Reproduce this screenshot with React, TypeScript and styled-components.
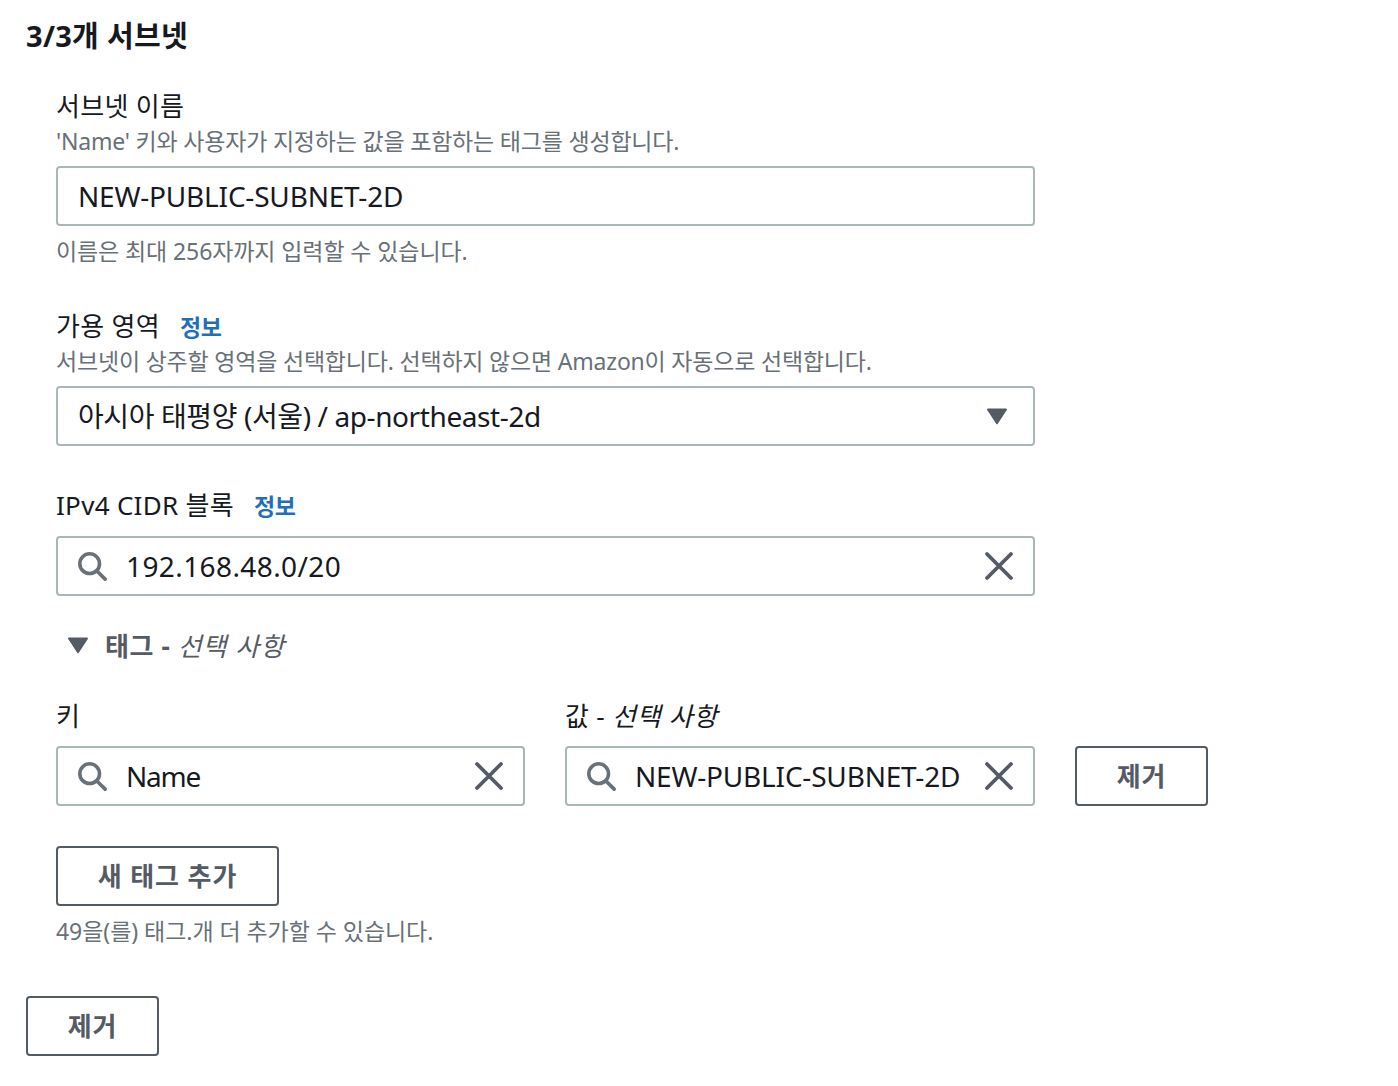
import React from "react";
import styled, { createGlobalStyle } from "styled-components";

const GlobalStyle = createGlobalStyle`
  html, body {
    margin: 0;
    background: #fff;
    font-family: "Noto Sans", "Noto Sans CJK KR", sans-serif;
  }
`;

const Page = styled.div`
  width: 1398px;
  height: 1086px;
  box-sizing: border-box;
  padding: 18px 0 0 26px;
  overflow: hidden;
`;

const Title = styled.h2`
  margin: 0;
  font-size: 29px;
  line-height: 36px;
  font-weight: 700;
  letter-spacing: 0.3px;
  color: #16191f;
`;

const Body = styled.div`
  width: 979px;
  margin: 34px 0 0 30px;
`;

const Field = styled.div<{ $gap?: number }>`
  margin-top: ${(p) => p.$gap ?? 0}px;
`;

const LabelRow = styled.div`
  display: flex;
  align-items: center;
  gap: 20px;
  height: 36px;
`;

const Label = styled.span`
  font-size: 26px;
  line-height: 36px;
  color: #16191f;
  letter-spacing: 0.3px;
  em {
    font-style: italic;
    letter-spacing: 0.7px;
  }
`;

const InfoLink = styled.a`
  font-size: 23px;
  font-weight: 700;
  color: #1f70b8;
  letter-spacing: -0.4px;
`;

const Hint = styled.div<{ $top?: number; $tracking?: number }>`
  margin-top: ${(p) => p.$top ?? 0}px;
  font-size: 23px;
  line-height: 32px;
  color: #687078;
  letter-spacing: ${(p) => p.$tracking ?? -0.2}px;
`;

const InputBox = styled.div<{ $top?: number }>`
  display: flex;
  align-items: center;
  box-sizing: border-box;
  width: 100%;
  height: 60px;
  margin-top: ${(p) => p.$top ?? 0}px;
  padding: 0 20px;
  border: 2px solid #aab7b8;
  border-radius: 4px;
  font-size: 28px;
  line-height: 36px;
  color: #16191f;
  white-space: nowrap;
`;

const InputText = styled.span<{ $tracking?: number }>`
  flex: 1;
  min-width: 0;
  letter-spacing: ${(p) => p.$tracking ?? -0.2}px;
`;

const SearchIcon = styled.svg`
  width: 30px;
  height: 30px;
  margin: 0 19px 0 -1px;
  flex: none;
`;

const ClearIcon = styled.svg`
  width: 32px;
  height: 32px;
  flex: none;
  margin-right: -2px;
`;

const Caret = styled.svg`
  width: 22px;
  height: 18px;
  flex: none;
  margin-right: 5px;
`;

const TagToggle = styled.div`
  display: flex;
  align-items: center;
  gap: 16px;
  height: 40px;
  margin: 29px 0 0 11px;
  font-size: 26px;
  font-weight: 700;
  color: #545b64;
  letter-spacing: 0.6px;
  em {
    font-weight: 400;
    font-style: italic;
    letter-spacing: 1px;
  }
`;

const ToggleCaret = styled.svg`
  width: 22px;
  height: 18px;
  flex: none;
`;

const TagColumns = styled.div`
  display: flex;
  gap: 40px;
  margin-top: 33px;
`;

const TagColumn = styled.div<{ $width: number }>`
  width: ${(p) => p.$width}px;
  flex: none;
`;

const RowButton = styled.div`
  align-self: flex-end;
  flex: none;
`;

const Button = styled.button<{ $width: number }>`
  display: block;
  box-sizing: border-box;
  width: ${(p) => p.$width}px;
  height: 60px;
  padding: 0 0 3px;
  background: #fff;
  border: 2px solid #545b64;
  border-radius: 4px;
  font-family: inherit;
  font-size: 26px;
  font-weight: 700;
  color: #545b64;
  letter-spacing: 0.9px;
`;

const BottomButton = styled.div`
  margin-top: 49px;
`;

const Search = () => (
  <SearchIcon viewBox="0 0 32 32" fill="none" stroke="#687078" strokeWidth="3.8">
    <circle cx="13.5" cy="13.5" r="10.5" />
    <path d="M21.5 21.5 30 30" strokeLinecap="round" />
  </SearchIcon>
);

const Clear = () => (
  <ClearIcon viewBox="0 0 32 32" fill="none" stroke="#545b64" strokeWidth="3.8" strokeLinecap="round">
    <path d="M4 4 28 28M28 4 4 28" />
  </ClearIcon>
);

const DownTriangle = () => (
  <path d="M2 1.5h18a1 1 0 0 1 .8 1.6l-9 13.6a1 1 0 0 1-1.6 0l-9-13.6A1 1 0 0 1 2 1.5Z" fill="#545b64" />
);

export default function App() {
  return (
    <Page>
      <GlobalStyle />
      <Title>3/3개 서브넷</Title>
      <Body>
        <Field>
          <LabelRow>
            <Label>서브넷 이름</Label>
          </LabelRow>
          <Hint $top={1}>'Name' 키와 사용자가 지정하는 값을 포함하는 태그를 생성합니다.</Hint>
          <InputBox $top={9}>
            <InputText>NEW-PUBLIC-SUBNET-2D</InputText>
          </InputBox>
          <Hint $top={9} $tracking={-0.1}>이름은 최대 256자까지 입력할 수 있습니다.</Hint>
        </Field>

        <Field $gap={41}>
          <LabelRow>
            <Label>가용 영역</Label>
            <InfoLink>정보</InfoLink>
          </LabelRow>
          <Hint $top={1}>서브넷이 상주할 영역을 선택합니다. 선택하지 않으면 Amazon이 자동으로 선택합니다.</Hint>
          <InputBox $top={9}>
            <InputText $tracking={-0.4}>아시아 태평양 (서울) / ap-northeast-2d</InputText>
            <Caret viewBox="0 0 22 18">
              <DownTriangle />
            </Caret>
          </InputBox>
        </Field>

        <Field $gap={41}>
          <LabelRow>
            <Label>IPv4 CIDR 블록</Label>
            <InfoLink>정보</InfoLink>
          </LabelRow>
          <InputBox $top={13}>
            <Search />
            <InputText $tracking={0.4}>192.168.48.0/20</InputText>
            <Clear />
          </InputBox>
        </Field>

        <TagToggle>
          <ToggleCaret viewBox="0 0 22 18">
            <DownTriangle />
          </ToggleCaret>
          <span>
            태그 - <em>선택 사항</em>
          </span>
        </TagToggle>

        <TagColumns>
          <TagColumn $width={469}>
            <Label>키</Label>
            <InputBox $top={12}>
              <Search />
              <InputText $tracking={-1.2}>Name</InputText>
              <Clear />
            </InputBox>
          </TagColumn>
          <TagColumn $width={470}>
            <Label>
              값 - <em>선택 사항</em>
            </Label>
            <InputBox $top={12}>
              <Search />
              <InputText>NEW-PUBLIC-SUBNET-2D</InputText>
              <Clear />
            </InputBox>
          </TagColumn>
          <RowButton>
            <Button $width={133}>제거</Button>
          </RowButton>
        </TagColumns>

        <Field $gap={40}>
          <Button $width={223}>새 태그 추가</Button>
          <Hint $top={9} $tracking={-0.05}>49을(를) 태그.개 더 추가할 수 있습니다.</Hint>
        </Field>
      </Body>
      <BottomButton>
        <Button $width={133}>제거</Button>
      </BottomButton>
    </Page>
  );
}
